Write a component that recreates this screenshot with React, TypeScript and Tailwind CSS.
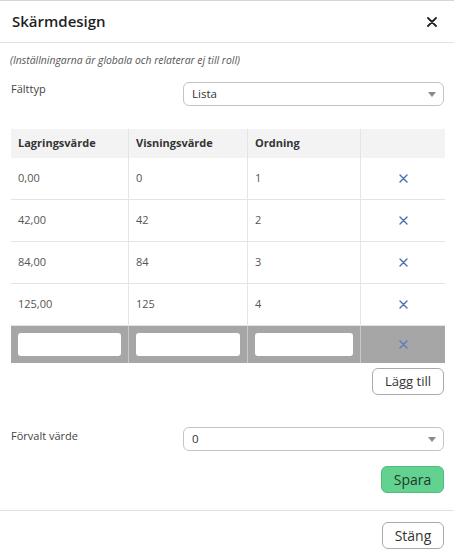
import React from 'react';

const rows = [
  ['0,00', '0', '1'],
  ['42,00', '42', '2'],
  ['84,00', '84', '3'],
  ['125,00', '125', '4'],
];

function Cross({ className = '' }: { className?: string }) {
  return (
    <svg width="9" height="9" viewBox="0 0 9 9" className={className}>
      <path d="M1 1L8 8M8 1L1 8" stroke="currentColor" strokeWidth="1.4" strokeLinecap="round" />
    </svg>
  );
}

function Select({ value }: { value: string }) {
  return (
    <div className="w-[261px] h-[24px] flex items-center justify-between border border-[#c4c4c4] rounded-[6px] pl-[8px] pr-[7px] bg-white">
      <span className="text-[11.5px] text-[#333]">{value}</span>
      <svg width="8" height="5" viewBox="0 0 8 5">
        <path d="M0 0H8L4 5Z" fill="#8a8a8a" />
      </svg>
    </div>
  );
}

export default function App() {
  return (
    <div
      className="w-[454px] h-[553px] bg-white border-t border-[#d6d6d6] text-[#444]"
      style={{ fontFamily: '"Open Sans", "Noto Sans", sans-serif' }}
    >
      {/* Header */}
      <div className="h-[42px] flex items-center justify-between pl-[12px] pr-[17px] border-b border-[#e2e2e2]">
        <h1 className="text-[15px] text-[#1f1f1f] font-semibold">Skärmdesign</h1>
        <svg width="10" height="10" viewBox="0 0 10 10">
          <path d="M1 1L9 9M9 1L1 9" stroke="#222" strokeWidth="1.8" strokeLinecap="round" />
        </svg>
      </div>

      <div className="px-[10px]">
        <p className="pt-[10px] text-[10.4px] italic text-[#555] leading-[14px]">
          (Inställningarna är globala och relaterar ej till roll)
        </p>

        {/* Fälttyp */}
        <div className="mt-[15px] flex justify-between items-start">
          <span className="text-[11px] text-[#444] pl-[1px] -mt-[1px]">Fälttyp</span>
          <Select value="Lista" />
        </div>

        {/* Table */}
        <div className="mt-[23px] ml-[1px] w-[434px]">
          <div className="grid grid-cols-[118px_119px_113px_84px] h-[29px] bg-[#f3f3f3]">
            {['Lagringsvärde', 'Visningsvärde', 'Ordning', ''].map((h, i) => (
              <div
                key={i}
                className={`flex items-center pl-[7px] text-[11px] font-bold text-[#333] ${i < 3 ? 'border-r border-[#e4e4e4]' : ''}`}
              >
                {h}
              </div>
            ))}
          </div>
          {rows.map((r, ri) => (
            <div key={ri} className="grid grid-cols-[118px_119px_113px_84px] h-[42px] border-b border-[#e4e4e4]">
              {r.map((c, ci) => (
                <div key={ci} className="flex items-center pl-[7px] text-[11px] text-[#555] border-r border-[#e4e4e4]">
                  {c}
                </div>
              ))}
              <div className="flex items-center justify-center">
                <Cross className="text-[#4a6db0]" />
              </div>
            </div>
          ))}
          <div className="grid grid-cols-[118px_119px_113px_84px] h-[37px] bg-[#a6a6a6]">
            {[0, 1, 2].map((i) => (
              <div key={i} className="flex items-center px-[7px] border-r border-[#c9c9c9]">
                <div className="w-full h-[23px] bg-white rounded-[3px]" />
              </div>
            ))}
            <div className="flex items-center justify-center">
              <Cross className="text-[#5b7cbf]" />
            </div>
          </div>
        </div>

        <div className="flex justify-end mt-[5px]">
          <button className="h-[27px] px-[12px] border border-[#aaa] rounded-[6px] text-[13px] text-[#333] bg-white">
            Lägg till
          </button>
        </div>

        {/* Förvalt värde */}
        <div className="mt-[32px] flex justify-between items-start">
          <span className="text-[11px] text-[#444] pl-[1px] mt-[1px]">Förvalt värde</span>
          <Select value="0" />
        </div>

        <div className="flex justify-end mt-[15px]">
          <button className="h-[27px] w-[63px] border border-[#4fbf7b] rounded-[6px] text-[14px] text-[#1d3b2a] bg-[#63d18f]">
            Spara
          </button>
        </div>
      </div>

      <div className="mt-[17px] border-t border-[#e2e2e2]" />

      <div className="flex justify-end px-[10px] mt-[11px]">
        <button className="h-[27px] w-[62px] border border-[#aaa] rounded-[6px] text-[14px] text-[#333] bg-white">
          Stäng
        </button>
      </div>
    </div>
  );
}
